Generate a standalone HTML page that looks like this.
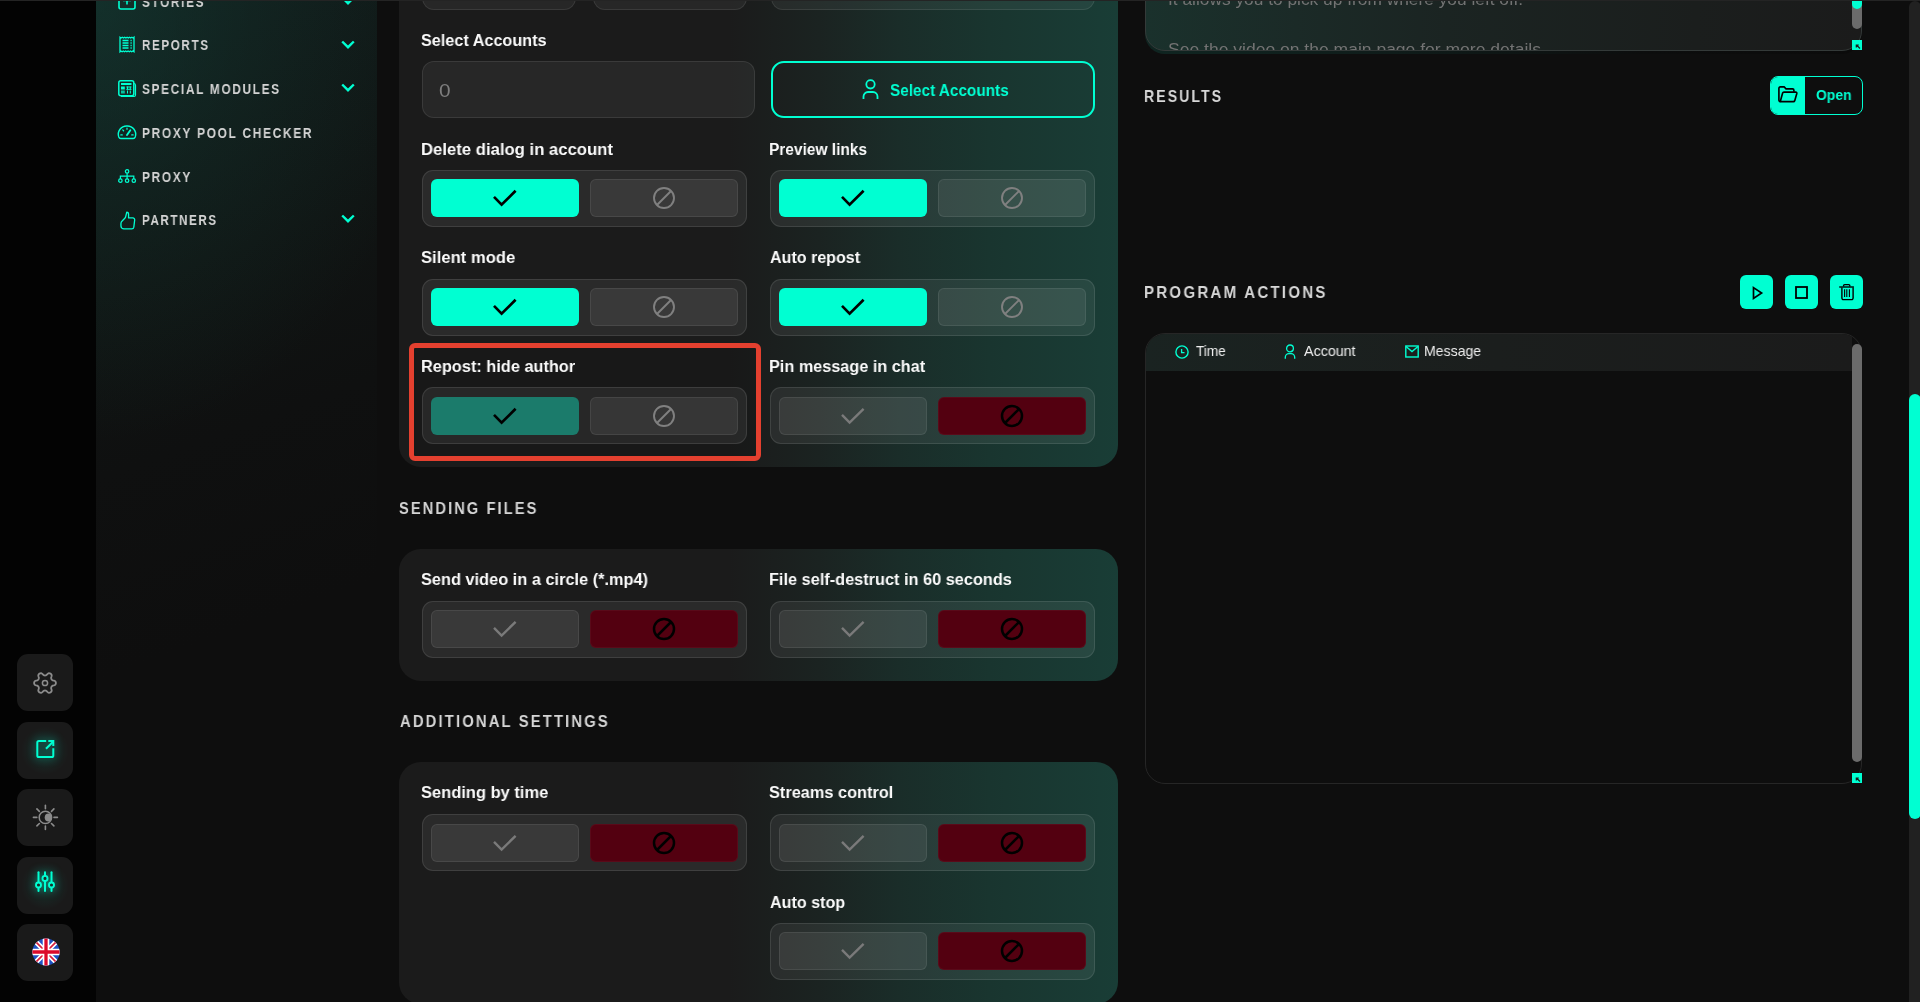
<!DOCTYPE html>
<html><head><meta charset="utf-8"><style>
*{box-sizing:border-box;margin:0;padding:0}
html,body{width:1920px;height:1002px;overflow:hidden;background:#0e0e0e;font-family:"Liberation Sans",sans-serif}
body{position:relative}
.a{position:absolute}
.t{position:absolute;white-space:nowrap;line-height:1;transform-origin:0 0;will-change:transform}
svg{position:absolute;overflow:visible}
</style></head><body>
<div class="a" style="left:0;top:0;width:96px;height:1002px;background:#030303"></div>
<div class="a" style="left:96px;top:0;width:281px;height:1002px;background:radial-gradient(ellipse 340px 440px at 0px 0px,rgba(20,62,54,0.6),rgba(20,62,54,0.28) 45%,rgba(20,62,54,0) 100%),linear-gradient(160deg,#111b1a 0px,#101413 280px,#0f1010 450px,#0e0e0e 640px,#0e0e0e 1027px)"></div>
<div class="a" style="left:17px;top:654px;width:56px;height:57px;border-radius:11px;background:#1a1a1a;"><svg style="left:15.3px;top:16px" width="26" height="26" viewBox="0 0 26 26"><path d="M23.90 13.00L23.80 13.71L23.51 14.38L23.01 14.99L21.89 15.38L20.76 15.64L20.20 15.98L19.79 16.35L19.50 16.75L19.30 17.21L19.18 17.75L19.16 18.41L19.51 19.51L19.73 20.67L19.46 21.41L19.02 22.00L18.45 22.44L17.79 22.71L17.06 22.80L16.28 22.66L15.38 21.89L14.60 21.04L14.02 20.73L13.50 20.56L13.00 20.50L12.50 20.56L11.98 20.73L11.40 21.04L10.62 21.89L9.72 22.66L8.94 22.80L8.21 22.71L7.55 22.44L6.98 22.00L6.54 21.41L6.27 20.67L6.49 19.51L6.84 18.41L6.82 17.75L6.70 17.21L6.50 16.75L6.21 16.35L5.80 15.98L5.24 15.64L4.11 15.38L2.99 14.99L2.49 14.38L2.20 13.71L2.10 13.00L2.20 12.29L2.49 11.62L2.99 11.01L4.11 10.62L5.24 10.36L5.80 10.02L6.21 9.65L6.50 9.25L6.70 8.79L6.82 8.25L6.84 7.59L6.49 6.49L6.27 5.33L6.54 4.59L6.98 4.00L7.55 3.56L8.21 3.29L8.94 3.20L9.72 3.34L10.62 4.11L11.40 4.96L11.98 5.27L12.50 5.44L13.00 5.50L13.50 5.44L14.02 5.27L14.60 4.96L15.38 4.11L16.28 3.34L17.06 3.20L17.79 3.29L18.45 3.56L19.02 4.00L19.46 4.59L19.73 5.33L19.51 6.49L19.16 7.59L19.18 8.25L19.30 8.79L19.50 9.25L19.79 9.65L20.20 10.02L20.76 10.36L21.89 10.62L23.01 11.01L23.51 11.62L23.80 12.29z" fill="none" stroke="#8c8c8c" stroke-width="1.8" stroke-linejoin="round"/><circle cx="13" cy="13" r="2.6" fill="none" stroke="#8c8c8c" stroke-width="1.5"/></svg></div>
<div class="a" style="left:17px;top:722px;width:56px;height:57px;border-radius:11px;background:radial-gradient(circle at 50% 50%, rgba(0,255,210,0.10) 0px, rgba(0,255,210,0.05) 12px, rgba(0,255,210,0.0) 24px),#1a1a1a;"><svg style="filter:drop-shadow(0 0 4px rgba(0,255,210,0.55));left:13px;top:13px" width="30" height="30" viewBox="0 0 30 30"><g fill="none" stroke="#00ffd2" stroke-width="2"><path d="M16.2 6.1H8.9a1.6 1.6 0 0 0-1.6 1.6V20.4a1.6 1.6 0 0 0 1.6 1.6H21.7a1.6 1.6 0 0 0 1.6-1.6V13.2"/><path d="M18.3 6.1H23.3V11.1"/><path d="M16 13.8L22.8 7"/></g></svg></div>
<div class="a" style="left:17px;top:789px;width:56px;height:57px;border-radius:11px;background:#1a1a1a;"><svg style="left:13px;top:13px" width="30" height="30" viewBox="0 0 30 30"><g stroke="#8c8c8c" stroke-width="1.6" stroke-linecap="round"><line x1="24.00" y1="15.40" x2="27.40" y2="15.40"/><line x1="21.48" y1="21.48" x2="23.89" y2="23.89"/><line x1="15.40" y1="24.00" x2="15.40" y2="27.40"/><line x1="9.32" y1="21.48" x2="6.91" y2="23.89"/><line x1="6.80" y1="15.40" x2="3.40" y2="15.40"/><line x1="9.32" y1="9.32" x2="6.91" y2="6.91"/><line x1="15.40" y1="6.80" x2="15.40" y2="3.40"/><line x1="21.48" y1="9.32" x2="23.89" y2="6.91"/></g><circle cx="15.4" cy="15.4" r="6.2" fill="none" stroke="#8c8c8c" stroke-width="1.5"/><defs><clipPath id="mc"><circle cx="15.4" cy="15.4" r="6.2"/></clipPath></defs><circle cx="18.6" cy="15.5" r="3.9" fill="#8c8c8c" clip-path="url(#mc)"/></svg></div>
<div class="a" style="left:17px;top:857px;width:56px;height:57px;border-radius:11px;background:radial-gradient(circle at 50% 50%, rgba(0,255,210,0.10) 0px, rgba(0,255,210,0.05) 12px, rgba(0,255,210,0.0) 24px),#1a1a1a;"><svg style="filter:drop-shadow(0 0 4px rgba(0,255,210,0.55));left:17px;top:13px" width="22" height="24" viewBox="0 0 22 24"><g stroke="#00ffd2" stroke-width="2" fill="none" stroke-linecap="round"><line x1="4.5" y1="2.2" x2="4.5" y2="20.9"/><line x1="11" y1="2.2" x2="11" y2="20.9"/><line x1="17.5" y1="2.2" x2="17.5" y2="20.9"/></g><g fill="#17302c" stroke="#00ffd2" stroke-width="1.9"><circle cx="4.5" cy="15" r="2.5"/><circle cx="11" cy="8.4" r="2.5"/><circle cx="17.5" cy="15" r="2.5"/></g></svg></div>
<div class="a" style="left:17px;top:924px;width:56px;height:57px;border-radius:11px;background:#1a1a1a;"><svg style="left:14.5px;top:13.9px" width="28" height="28" viewBox="0 0 28 28"><defs><clipPath id="fc"><circle cx="14" cy="14" r="13.6"/></clipPath></defs><g clip-path="url(#fc)"><rect width="28" height="28" fill="#1f52c4"/><path d="M0 0L28 28M28 0L0 28" stroke="#fff" stroke-width="5"/><path d="M0 0L28 28M28 0L0 28" stroke="#d81e3c" stroke-width="1.6"/><path d="M14 0V28M0 14H28" stroke="#fff" stroke-width="6.6"/><path d="M14 0V28M0 14H28" stroke="#dc0a2a" stroke-width="3.3"/></g></svg></div>
<div class="t" style="left:142.15px;top:-4.45px;font-size:13.9px;font-weight:700;color:#d4d4d4;letter-spacing:2.0px;transform:scaleX(0.8451);">STORIES</div>
<svg style="left:341px;top:-3.9px" width="14" height="9" viewBox="0 0 14 9"><path d="M1.2 1.5L7 7.2L12.8 1.5" fill="none" stroke="#00ffd2" stroke-width="2.4"/></svg>
<div class="t" style="left:142.17px;top:39.20px;font-size:13.9px;font-weight:700;color:#d4d4d4;letter-spacing:2.0px;transform:scaleX(0.8333);">REPORTS</div>
<svg style="left:341px;top:39.7px" width="14" height="9" viewBox="0 0 14 9"><path d="M1.2 1.5L7 7.2L12.8 1.5" fill="none" stroke="#00ffd2" stroke-width="2.4"/></svg>
<div class="t" style="left:142.15px;top:82.80px;font-size:13.9px;font-weight:700;color:#d4d4d4;letter-spacing:2.0px;transform:scaleX(0.8500);">SPECIAL MODULES</div>
<svg style="left:341px;top:83.3px" width="14" height="9" viewBox="0 0 14 9"><path d="M1.2 1.5L7 7.2L12.8 1.5" fill="none" stroke="#00ffd2" stroke-width="2.4"/></svg>
<div class="t" style="left:142.14px;top:126.70px;font-size:13.9px;font-weight:700;color:#d4d4d4;letter-spacing:2.0px;transform:scaleX(0.8571);">PROXY POOL CHECKER</div>
<div class="t" style="left:142.15px;top:170.90px;font-size:13.9px;font-weight:700;color:#d4d4d4;letter-spacing:2.0px;transform:scaleX(0.8545);">PROXY</div>
<div class="t" style="left:142.17px;top:213.80px;font-size:13.9px;font-weight:700;color:#d4d4d4;letter-spacing:2.0px;transform:scaleX(0.8295);">PARTNERS</div>
<svg style="left:341px;top:214.3px" width="14" height="9" viewBox="0 0 14 9"><path d="M1.2 1.5L7 7.2L12.8 1.5" fill="none" stroke="#00ffd2" stroke-width="2.4"/></svg>
<svg style="left:118px;top:-8px" width="18" height="18" viewBox="0 0 18 18"><rect x="1" y="1" width="16" height="16" rx="2" fill="none" stroke="#00ffd2" stroke-width="1.6"/><path d="M9 4.5v8M5 8.5h8" stroke="#00ffd2" stroke-width="1.6"/></svg>
<svg style="left:119px;top:36px" width="16" height="17" viewBox="0 0 16 17"><path d="M1 1.2l1.1.8 1.2-.8 1.2.8 1.2-.8 1.2.8 1.2-.8 1.2.8 1.2-.8 1.2.8 1.2-.8 1.2.8L15 1.2V15.8l-1.1-.8-1.2.8-1.2-.8-1.2.8-1.2-.8-1.2.8-1.2-.8-1.2.8-1.2-.8-1.2.8-1.2-.8L1 15.8z" fill="none" stroke="#00ffd2" stroke-width="1.3"/><path d="M3.5 4.5h6M3.5 7h6M3.5 9.5h6M3.5 12h6" stroke="#00ffd2" stroke-width="1.3"/><path d="M11.5 4.5h1.2M11.5 7h1.2M11.5 9.5h1.2M11.5 12h1.2" stroke="#00ffd2" stroke-width="1.3"/></svg>
<svg style="left:118px;top:80px" width="19" height="17" viewBox="0 0 19 17"><path d="M15.5 3.5h.2a1.8 1.8 0 0 1 1.8 1.8V15a1.5 1.5 0 0 1-1.5 1.5H3" fill="none" stroke="#00ffd2" stroke-width="1.2"/><rect x="0.8" y="0.8" width="15" height="15" rx="2" fill="none" stroke="#00ffd2" stroke-width="1.5"/><rect x="3" y="3" width="10.5" height="2" fill="#00ffd2"/><rect x="3" y="6.5" width="3.8" height="3" fill="#00ffd2"/><rect x="3" y="10.5" width="3.8" height="3" fill="#00ffd2" opacity=".7"/><path d="M8.3 7h5.2M8.3 9.3h5.2M9.5 10.5v3M12.3 10.5v3M9.5 6.5v3M12.3 6.5v3" stroke="#00ffd2" stroke-width="1"/></svg>
<svg style="left:117.8px;top:125px" width="18" height="14.2" viewBox="0 0 19 15"><path d="M3 14.2h13a2.6 2.6 0 0 0 2.2-1.6A8.8 8.8 0 0 0 9.5 1 8.8 8.8 0 0 0 .8 12.6 2.6 2.6 0 0 0 3 14.2z" fill="none" stroke="#00ffd2" stroke-width="1.5"/><path d="M9.5 10.5L13 5.5" stroke="#00ffd2" stroke-width="2" stroke-linecap="round"/><path d="M3 10.5h1.5M14.5 10.5H16M5 5.2l.9.9M9.5 3.3v1.3" stroke="#00ffd2" stroke-width="1.3" stroke-linecap="round"/></svg>
<svg style="left:117.8px;top:168.8px" width="18.2" height="14.4" viewBox="0 0 19 15"><circle cx="9.5" cy="2.5" r="1.8" fill="none" stroke="#00ffd2" stroke-width="1.3"/><path d="M9.5 4.3v3M2.5 10.5V7.3h14v3.2" fill="none" stroke="#00ffd2" stroke-width="1.3"/><circle cx="2.5" cy="12.2" r="1.8" fill="none" stroke="#00ffd2" stroke-width="1.3"/><circle cx="9.5" cy="12.2" r="1.8" fill="none" stroke="#00ffd2" stroke-width="1.3"/><circle cx="16.5" cy="12.2" r="1.8" fill="none" stroke="#00ffd2" stroke-width="1.3"/><path d="M9.5 7.3v3" stroke="#00ffd2" stroke-width="1.3"/></svg>
<svg style="left:119.6px;top:210.6px" width="16" height="18.8" viewBox="0 0 17 20"><path d="M7.2 1.2c1.4 0 1.9 1 1.9 2.3v3.9h4.6c1.3 0 2.1 1 1.9 2.2l-.9 7.6c-.2 1.2-1 1.9-2.2 1.9H4.2A3.2 3.2 0 0 1 1 15.9v-2.7c0-1.2.6-2 1.5-2.8l2.6-2.6c.6-.6.9-1.2 1-2z" fill="none" stroke="#00ffd2" stroke-width="1.4" stroke-linejoin="round"/></svg>
<div class="a" style="left:399px;top:-300px;width:719px;height:766.5px;border-radius:22px;background:linear-gradient(90deg,#1b1b1b 0px,#1b1b1b 330px,#1b2321 420px,#1a2d29 500px,#19352f 590px,#193d36 719px)"></div>
<div class="a" style="left:399px;top:549px;width:719px;height:131.5px;border-radius:22px;background:linear-gradient(90deg,#1b1b1b 0px,#1b1b1b 330px,#1b2321 420px,#1a2d29 500px,#19352f 590px,#193d36 719px)"></div>
<div class="a" style="left:399px;top:762px;width:719px;height:241.5px;border-radius:22px;background:linear-gradient(90deg,#1b1b1b 0px,#1b1b1b 330px,#1b2321 420px,#1a2d29 500px,#19352f 590px,#193d36 719px)"></div>
<div class="a" style="left:422px;top:-48px;width:154px;height:57.5px;border-radius:12px;background:rgba(255,255,255,0.055);border:1px solid rgba(255,255,255,0.09)"></div>
<div class="a" style="left:593px;top:-48px;width:154px;height:57.5px;border-radius:12px;background:rgba(255,255,255,0.055);border:1px solid rgba(255,255,255,0.09)"></div>
<div class="a" style="left:771px;top:-48px;width:324px;height:57.5px;border-radius:12px;background:rgba(255,255,255,0.055);border:1px solid rgba(255,255,255,0.09)"></div>
<div class="t" style="left:421.07px;top:32.20px;font-size:17.4px;font-weight:700;color:#fbfbfb;letter-spacing:0px;transform:scaleX(0.9323);">Select Accounts</div>
<div class="a" style="left:422px;top:61px;width:333px;height:57px;border-radius:12px;background:rgba(255,255,255,0.055);border:1px solid rgba(255,255,255,0.09)"></div>
<div class="t" style="left:439.07px;top:81.50px;font-size:18.4px;font-weight:400;color:#7e7e7e;letter-spacing:0px;transform:scaleX(1.1333);">0</div>
<div class="a" style="left:771px;top:61px;width:324px;height:57px;border-radius:13px;border:2px solid #00ffd2"></div>
<svg style="left:862px;top:79px" width="17" height="21" viewBox="0 0 17 21"><circle cx="8.5" cy="5.3" r="4.2" fill="none" stroke="#00ffd2" stroke-width="1.8"/><path d="M1.5 20v-2.5a4.5 4.5 0 0 1 4.5-4.5h5a4.5 4.5 0 0 1 4.5 4.5V20" fill="none" stroke="#00ffd2" stroke-width="1.8"/></svg>
<div class="t" style="left:890.09px;top:82.80px;font-size:16.9px;font-weight:700;color:#00ffd2;letter-spacing:0px;transform:scaleX(0.9070);">Select Accounts</div>
<div class="a" style="left:413px;top:347px;width:344px;height:110px;background:rgba(0,0,0,0.09)"></div>
<div class="t" style="left:421.04px;top:140.70px;font-size:17.4px;font-weight:700;color:#fbfbfb;letter-spacing:0px;transform:scaleX(0.9598);">Delete dialog in account</div>
<div class="a" style="left:422px;top:170px;width:325px;height:57px;border-radius:11px;background:rgba(255,255,255,0.065);border:1px solid rgba(255,255,255,0.1)"></div>
<div class="a" style="left:431px;top:179px;width:148px;height:38px;border-radius:6px;background:#00ffd2"><svg style="left:0;top:0" width="148" height="38" viewBox="0 0 148 38"><path d="M63 17.9L70.6 25.6L84.6 11.8" fill="none" stroke="#000" stroke-width="2.7"/></svg></div>
<div class="a" style="left:590px;top:179px;width:148px;height:38px;border-radius:6px;background:rgba(255,255,255,0.07);border:1px solid rgba(255,255,255,0.08)"><div class="a" style="left:-1px;top:-1px"><svg style="left:0;top:0" width="148" height="38" viewBox="0 0 148 38"><circle cx="74" cy="19" r="10" fill="none" stroke="#808080" stroke-width="1.9"/><path d="M81 12L67 26" stroke="#808080" stroke-width="1.9"/></svg></div></div>
<div class="t" style="left:769.11px;top:140.70px;font-size:17.4px;font-weight:700;color:#fbfbfb;letter-spacing:0px;transform:scaleX(0.8899);">Preview links</div>
<div class="a" style="left:770px;top:170px;width:325px;height:57px;border-radius:11px;background:rgba(255,255,255,0.065);border:1px solid rgba(255,255,255,0.1)"></div>
<div class="a" style="left:779px;top:179px;width:148px;height:38px;border-radius:6px;background:#00ffd2"><svg style="left:0;top:0" width="148" height="38" viewBox="0 0 148 38"><path d="M63 17.9L70.6 25.6L84.6 11.8" fill="none" stroke="#000" stroke-width="2.7"/></svg></div>
<div class="a" style="left:938px;top:179px;width:148px;height:38px;border-radius:6px;background:rgba(255,255,255,0.07);border:1px solid rgba(255,255,255,0.08)"><div class="a" style="left:-1px;top:-1px"><svg style="left:0;top:0" width="148" height="38" viewBox="0 0 148 38"><circle cx="74" cy="19" r="10" fill="none" stroke="#808080" stroke-width="1.9"/><path d="M81 12L67 26" stroke="#808080" stroke-width="1.9"/></svg></div></div>
<div class="t" style="left:421.04px;top:249.30px;font-size:17.4px;font-weight:700;color:#fbfbfb;letter-spacing:0px;transform:scaleX(0.9557);">Silent mode</div>
<div class="a" style="left:422px;top:279px;width:325px;height:57px;border-radius:11px;background:rgba(255,255,255,0.065);border:1px solid rgba(255,255,255,0.1)"></div>
<div class="a" style="left:431px;top:288px;width:148px;height:38px;border-radius:6px;background:#00ffd2"><svg style="left:0;top:0" width="148" height="38" viewBox="0 0 148 38"><path d="M63 17.9L70.6 25.6L84.6 11.8" fill="none" stroke="#000" stroke-width="2.7"/></svg></div>
<div class="a" style="left:590px;top:288px;width:148px;height:38px;border-radius:6px;background:rgba(255,255,255,0.07);border:1px solid rgba(255,255,255,0.08)"><div class="a" style="left:-1px;top:-1px"><svg style="left:0;top:0" width="148" height="38" viewBox="0 0 148 38"><circle cx="74" cy="19" r="10" fill="none" stroke="#808080" stroke-width="1.9"/><path d="M81 12L67 26" stroke="#808080" stroke-width="1.9"/></svg></div></div>
<div class="t" style="left:770.00px;top:249.30px;font-size:17.4px;font-weight:700;color:#fbfbfb;letter-spacing:0px;transform:scaleX(0.9235);">Auto repost</div>
<div class="a" style="left:770px;top:279px;width:325px;height:57px;border-radius:11px;background:rgba(255,255,255,0.065);border:1px solid rgba(255,255,255,0.1)"></div>
<div class="a" style="left:779px;top:288px;width:148px;height:38px;border-radius:6px;background:#00ffd2"><svg style="left:0;top:0" width="148" height="38" viewBox="0 0 148 38"><path d="M63 17.9L70.6 25.6L84.6 11.8" fill="none" stroke="#000" stroke-width="2.7"/></svg></div>
<div class="a" style="left:938px;top:288px;width:148px;height:38px;border-radius:6px;background:rgba(255,255,255,0.07);border:1px solid rgba(255,255,255,0.08)"><div class="a" style="left:-1px;top:-1px"><svg style="left:0;top:0" width="148" height="38" viewBox="0 0 148 38"><circle cx="74" cy="19" r="10" fill="none" stroke="#808080" stroke-width="1.9"/><path d="M81 12L67 26" stroke="#808080" stroke-width="1.9"/></svg></div></div>
<div class="t" style="left:421.06px;top:358.30px;font-size:17.4px;font-weight:700;color:#fbfbfb;letter-spacing:0px;transform:scaleX(0.9387);">Repost: hide author</div>
<div class="a" style="left:422px;top:387px;width:325px;height:57px;border-radius:11px;background:rgba(255,255,255,0.065);border:1px solid rgba(255,255,255,0.1)"></div>
<div class="a" style="left:431px;top:397px;width:148px;height:38px;border-radius:6px;background:#1b7b6b"><svg style="left:0;top:0" width="148" height="38" viewBox="0 0 148 38"><path d="M63 17.9L70.6 25.6L84.6 11.8" fill="none" stroke="#000" stroke-width="2.7"/></svg></div>
<div class="a" style="left:590px;top:397px;width:148px;height:38px;border-radius:6px;background:rgba(255,255,255,0.07);border:1px solid rgba(255,255,255,0.08)"><div class="a" style="left:-1px;top:-1px"><svg style="left:0;top:0" width="148" height="38" viewBox="0 0 148 38"><circle cx="74" cy="19" r="10" fill="none" stroke="#808080" stroke-width="1.9"/><path d="M81 12L67 26" stroke="#808080" stroke-width="1.9"/></svg></div></div>
<div class="t" style="left:769.07px;top:358.30px;font-size:17.4px;font-weight:700;color:#fbfbfb;letter-spacing:0px;transform:scaleX(0.9337);">Pin message in chat</div>
<div class="a" style="left:770px;top:387px;width:325px;height:57px;border-radius:11px;background:rgba(255,255,255,0.065);border:1px solid rgba(255,255,255,0.1)"></div>
<div class="a" style="left:779px;top:397px;width:148px;height:38px;border-radius:6px;background:rgba(255,255,255,0.07);border:1px solid rgba(255,255,255,0.08)"><div class="a" style="left:-1px;top:-1px"><svg style="left:0;top:0" width="148" height="38" viewBox="0 0 148 38"><path d="M63 17.9L70.6 25.6L84.6 11.8" fill="none" stroke="#7a7a7a" stroke-width="2.4"/></svg></div></div>
<div class="a" style="left:938px;top:397px;width:148px;height:38px;border-radius:6px;background:#530010;border:1px solid rgba(255,255,255,0.04)"><div class="a" style="left:-1px;top:-1px"><svg style="left:0;top:0" width="148" height="38" viewBox="0 0 148 38"><circle cx="74" cy="19" r="10" fill="none" stroke="#000" stroke-width="2.5"/><path d="M81 12L67 26" stroke="#000" stroke-width="2.5"/></svg></div></div>
<div class="t" style="left:421.06px;top:571.00px;font-size:17.4px;font-weight:700;color:#fbfbfb;letter-spacing:0px;transform:scaleX(0.9396);">Send video in a circle (*.mp4)</div>
<div class="a" style="left:422px;top:601px;width:325px;height:57px;border-radius:11px;background:rgba(255,255,255,0.065);border:1px solid rgba(255,255,255,0.1)"></div>
<div class="a" style="left:431px;top:610px;width:148px;height:38px;border-radius:6px;background:rgba(255,255,255,0.07);border:1px solid rgba(255,255,255,0.08)"><div class="a" style="left:-1px;top:-1px"><svg style="left:0;top:0" width="148" height="38" viewBox="0 0 148 38"><path d="M63 17.9L70.6 25.6L84.6 11.8" fill="none" stroke="#7a7a7a" stroke-width="2.4"/></svg></div></div>
<div class="a" style="left:590px;top:610px;width:148px;height:38px;border-radius:6px;background:#530010;border:1px solid rgba(255,255,255,0.04)"><div class="a" style="left:-1px;top:-1px"><svg style="left:0;top:0" width="148" height="38" viewBox="0 0 148 38"><circle cx="74" cy="19" r="10" fill="none" stroke="#000" stroke-width="2.5"/><path d="M81 12L67 26" stroke="#000" stroke-width="2.5"/></svg></div></div>
<div class="t" style="left:769.06px;top:571.00px;font-size:17.4px;font-weight:700;color:#fbfbfb;letter-spacing:0px;transform:scaleX(0.9377);">File self-destruct in 60 seconds</div>
<div class="a" style="left:770px;top:601px;width:325px;height:57px;border-radius:11px;background:rgba(255,255,255,0.065);border:1px solid rgba(255,255,255,0.1)"></div>
<div class="a" style="left:779px;top:610px;width:148px;height:38px;border-radius:6px;background:rgba(255,255,255,0.07);border:1px solid rgba(255,255,255,0.08)"><div class="a" style="left:-1px;top:-1px"><svg style="left:0;top:0" width="148" height="38" viewBox="0 0 148 38"><path d="M63 17.9L70.6 25.6L84.6 11.8" fill="none" stroke="#7a7a7a" stroke-width="2.4"/></svg></div></div>
<div class="a" style="left:938px;top:610px;width:148px;height:38px;border-radius:6px;background:#530010;border:1px solid rgba(255,255,255,0.04)"><div class="a" style="left:-1px;top:-1px"><svg style="left:0;top:0" width="148" height="38" viewBox="0 0 148 38"><circle cx="74" cy="19" r="10" fill="none" stroke="#000" stroke-width="2.5"/><path d="M81 12L67 26" stroke="#000" stroke-width="2.5"/></svg></div></div>
<div class="t" style="left:421.05px;top:784.40px;font-size:17.4px;font-weight:700;color:#fbfbfb;letter-spacing:0px;transform:scaleX(0.9474);">Sending by time</div>
<div class="a" style="left:422px;top:814px;width:325px;height:57px;border-radius:11px;background:rgba(255,255,255,0.065);border:1px solid rgba(255,255,255,0.1)"></div>
<div class="a" style="left:431px;top:824px;width:148px;height:38px;border-radius:6px;background:rgba(255,255,255,0.07);border:1px solid rgba(255,255,255,0.08)"><div class="a" style="left:-1px;top:-1px"><svg style="left:0;top:0" width="148" height="38" viewBox="0 0 148 38"><path d="M63 17.9L70.6 25.6L84.6 11.8" fill="none" stroke="#7a7a7a" stroke-width="2.4"/></svg></div></div>
<div class="a" style="left:590px;top:824px;width:148px;height:38px;border-radius:6px;background:#530010;border:1px solid rgba(255,255,255,0.04)"><div class="a" style="left:-1px;top:-1px"><svg style="left:0;top:0" width="148" height="38" viewBox="0 0 148 38"><circle cx="74" cy="19" r="10" fill="none" stroke="#000" stroke-width="2.5"/><path d="M81 12L67 26" stroke="#000" stroke-width="2.5"/></svg></div></div>
<div class="t" style="left:769.06px;top:784.40px;font-size:17.4px;font-weight:700;color:#fbfbfb;letter-spacing:0px;transform:scaleX(0.9385);">Streams control</div>
<div class="a" style="left:770px;top:814px;width:325px;height:57px;border-radius:11px;background:rgba(255,255,255,0.065);border:1px solid rgba(255,255,255,0.1)"></div>
<div class="a" style="left:779px;top:824px;width:148px;height:38px;border-radius:6px;background:rgba(255,255,255,0.07);border:1px solid rgba(255,255,255,0.08)"><div class="a" style="left:-1px;top:-1px"><svg style="left:0;top:0" width="148" height="38" viewBox="0 0 148 38"><path d="M63 17.9L70.6 25.6L84.6 11.8" fill="none" stroke="#7a7a7a" stroke-width="2.4"/></svg></div></div>
<div class="a" style="left:938px;top:824px;width:148px;height:38px;border-radius:6px;background:#530010;border:1px solid rgba(255,255,255,0.04)"><div class="a" style="left:-1px;top:-1px"><svg style="left:0;top:0" width="148" height="38" viewBox="0 0 148 38"><circle cx="74" cy="19" r="10" fill="none" stroke="#000" stroke-width="2.5"/><path d="M81 12L67 26" stroke="#000" stroke-width="2.5"/></svg></div></div>
<div class="t" style="left:770.00px;top:893.80px;font-size:17.4px;font-weight:700;color:#fbfbfb;letter-spacing:0px;transform:scaleX(0.9259);">Auto stop</div>
<div class="a" style="left:770px;top:923px;width:325px;height:57px;border-radius:11px;background:rgba(255,255,255,0.065);border:1px solid rgba(255,255,255,0.1)"></div>
<div class="a" style="left:779px;top:932px;width:148px;height:38px;border-radius:6px;background:rgba(255,255,255,0.07);border:1px solid rgba(255,255,255,0.08)"><div class="a" style="left:-1px;top:-1px"><svg style="left:0;top:0" width="148" height="38" viewBox="0 0 148 38"><path d="M63 17.9L70.6 25.6L84.6 11.8" fill="none" stroke="#7a7a7a" stroke-width="2.4"/></svg></div></div>
<div class="a" style="left:938px;top:932px;width:148px;height:38px;border-radius:6px;background:#530010;border:1px solid rgba(255,255,255,0.04)"><div class="a" style="left:-1px;top:-1px"><svg style="left:0;top:0" width="148" height="38" viewBox="0 0 148 38"><circle cx="74" cy="19" r="10" fill="none" stroke="#000" stroke-width="2.5"/><path d="M81 12L67 26" stroke="#000" stroke-width="2.5"/></svg></div></div>
<div class="a" style="left:409px;top:343px;width:352px;height:118px;border:5px solid #e4402f;border-radius:6px"></div>
<div class="t" style="left:398.59px;top:500.20px;font-size:16.1px;font-weight:700;color:#d6d6d6;letter-spacing:2.3px;transform:scaleX(0.9100);">SENDING FILES</div>
<div class="t" style="left:399.50px;top:713.20px;font-size:16.1px;font-weight:700;color:#d6d6d6;letter-spacing:2.3px;transform:scaleX(0.9222);">ADDITIONAL SETTINGS</div>
<div class="a" style="left:1145px;top:-200px;width:717px;height:253.6px;border-radius:20px;background:linear-gradient(90deg,#0f2521 0px,#0f1c1a 250px,#0c0d0d 500px,#0b0b0b 717px)"></div>
<div class="a" style="left:1145px;top:-200px;width:717px;height:251px;border-radius:20px;background:linear-gradient(90deg,#1a312c 0px,#1b2a27 150px,#1b2422 300px,#1b1e1d 550px,#1b1b1b 717px);border:1px solid #343a39;overflow:hidden"></div>
<div class="a" style="left:0;top:0;width:1852px;height:50.4px;overflow:hidden">
<div class="t" style="left:1167.60px;top:-9.40px;font-size:17.3px;font-weight:400;color:#737373;letter-spacing:0px;transform:scaleX(1.0028);">It allows you to pick up from where you left off.</div>
<div class="t" style="left:1168.39px;top:41.00px;font-size:17.3px;font-weight:400;color:#737373;letter-spacing:0px;transform:scaleX(1.0136);">See the video on the main page for more details</div>
</div>
<div class="a" style="left:1852px;top:-6px;width:10px;height:35px;border-radius:5px;background:#6b6b6b"></div>
<div class="a" style="left:1852px;top:-4px;width:10px;height:12.5px;border-radius:5px;background:#00ffd2"></div>
<div class="a" style="left:1852px;top:40px;width:10px;height:10px;background:#00ffd2"><svg style="left:0;top:0" width="10" height="10" viewBox="0 0 10 10"><path d="M8 8.5L4.5 5M4.3 7.5V5H6.8" fill="none" stroke="#1a1a1a" stroke-width="1.2"/></svg></div>
<div class="t" style="left:1144.13px;top:87.80px;font-size:16.1px;font-weight:700;color:#d8d8d8;letter-spacing:2.4px;transform:scaleX(0.8736);">RESULTS</div>
<div class="a" style="left:1770px;top:76px;width:93px;height:39px;border-radius:8px;border:1.5px solid #00ffd2;overflow:hidden"><div class="a" style="left:0;top:0;width:34px;height:39px;background:#00ffd2"></div></div>
<svg style="left:1778.3px;top:85.7px" width="20" height="17" viewBox="0 0 22 18" preserveAspectRatio="none"><path d="M2.5 16.5A1.5 1.5 0 0 1 1 15V2.5A1.5 1.5 0 0 1 2.5 1h4.3l2 2h7.2a1.5 1.5 0 0 1 1.5 1.5V6" fill="none" stroke="#000" stroke-width="1.8" stroke-linejoin="round"/><path d="M2.5 16.5l2.6-9a1.5 1.5 0 0 1 1.4-1h13a1.2 1.2 0 0 1 1.2 1.5l-2.3 7.5a1.5 1.5 0 0 1-1.4 1z" fill="none" stroke="#000" stroke-width="1.8" stroke-linejoin="round"/></svg>
<div class="t" style="left:1815.60px;top:88.30px;font-size:14.5px;font-weight:700;color:#00ffd2;letter-spacing:0px;transform:scaleX(0.9583);">Open</div>
<div class="t" style="left:1144.25px;top:284.80px;font-size:15.9px;font-weight:700;color:#d8d8d8;letter-spacing:2.4px;transform:scaleX(0.9453);">PROGRAM ACTIONS</div>
<div class="a" style="left:1740px;top:275px;width:33px;height:34px;border-radius:6px;background:#00ffd2"></div>
<div class="a" style="left:1785px;top:275px;width:33px;height:34px;border-radius:6px;background:#00ffd2"></div>
<div class="a" style="left:1830px;top:275px;width:33px;height:34px;border-radius:6px;background:#00ffd2"></div>
<svg style="left:1752px;top:285.5px" width="12" height="14" viewBox="0 0 12 14"><path d="M1.5 1.6L9.6 7L1.5 12.4z" fill="none" stroke="#000" stroke-width="1.7" stroke-linejoin="miter"/></svg>
<svg style="left:1795px;top:286px" width="13" height="13" viewBox="0 0 13 13"><rect x="1" y="1" width="11" height="11" fill="none" stroke="#000" stroke-width="1.8"/></svg>
<svg style="left:1830px;top:275px" width="33" height="34" viewBox="0 0 33 34"><g fill="none" stroke="#000" stroke-width="1.4"><path d="M9.2 12H23.9"/><path d="M13.6 11.6V10.6a1 1 0 0 1 1-1h4.2a1 1 0 0 1 1 1V11.6"/><path d="M11.9 12.4V23.1a1.5 1.5 0 0 0 1.5 1.5h8.2a1.5 1.5 0 0 0 1.5-1.5V12.4"/></g><path d="M14.6 14.3V22M16.8 14.3V22M19.4 14.3V22" stroke="#000" stroke-width="1.1"/></svg>
<div class="a" style="left:1145px;top:333px;width:717px;height:451px;border-radius:20px;border:1px solid #262626;overflow:hidden"><div class="a" style="left:0;top:0;width:706px;height:37px;background:linear-gradient(90deg,#1a2321 0px,#1b1e1d 350px,#1b1b1b 706px)"></div></div>
<div class="a" style="left:1852px;top:344px;width:10px;height:418px;border-radius:5px;background:#6b6b6b"></div>
<div class="a" style="left:1852px;top:773px;width:10px;height:10px;background:#00ffd2"><svg style="left:0;top:0" width="10" height="10" viewBox="0 0 10 10"><path d="M8 8.5L4.5 5M4.3 7.5V5H6.8" fill="none" stroke="#1a1a1a" stroke-width="1.2"/></svg></div>
<svg style="left:1175px;top:344.5px" width="14" height="14" viewBox="0 0 14 14"><circle cx="7" cy="7" r="6.1" fill="none" stroke="#00ffd2" stroke-width="1.4"/><path d="M6.6 3.9V7.6h2.9" fill="none" stroke="#00ffd2" stroke-width="1.3"/></svg>
<div class="t" style="left:1195.50px;top:344.00px;font-size:14.5px;font-weight:400;color:#eeeeee;letter-spacing:0px;transform:scaleX(0.9419);">Time</div>
<svg style="left:1284px;top:344px" width="12" height="15" viewBox="0 0 12 15"><circle cx="6" cy="4.4" r="3.4" fill="none" stroke="#00ffd2" stroke-width="1.3"/><path d="M1.3 14.8V13.2a3.6 3.6 0 0 1 3.6-3.6h2.2a3.6 3.6 0 0 1 3.6 3.6V14.8" fill="none" stroke="#00ffd2" stroke-width="1.3"/></svg>
<div class="t" style="left:1303.80px;top:344.00px;font-size:14.5px;font-weight:400;color:#eeeeee;letter-spacing:0px;transform:scaleX(0.9846);">Account</div>
<svg style="left:1405px;top:345px" width="14" height="13" viewBox="0 0 14 13"><rect x=".8" y="1" width="12.4" height="11" fill="none" stroke="#00ffd2" stroke-width="1.4"/><path d="M1 1.5l6 5 6-5" fill="none" stroke="#00ffd2" stroke-width="1.4"/></svg>
<div class="t" style="left:1424.33px;top:344.00px;font-size:14.5px;font-weight:400;color:#eeeeee;letter-spacing:0px;transform:scaleX(0.9702);">Message</div>
<div class="a" style="left:1909px;top:1px;width:12px;height:1001px;border-radius:6px 6px 0 0;background:#212121"></div>
<div class="a" style="left:1909px;top:394px;width:12px;height:425px;border-radius:6px;background:#00ffd2"></div>
<div class="a" style="left:0;top:0;width:1920px;height:1px;background:#242424;z-index:50"></div>
</body></html>
